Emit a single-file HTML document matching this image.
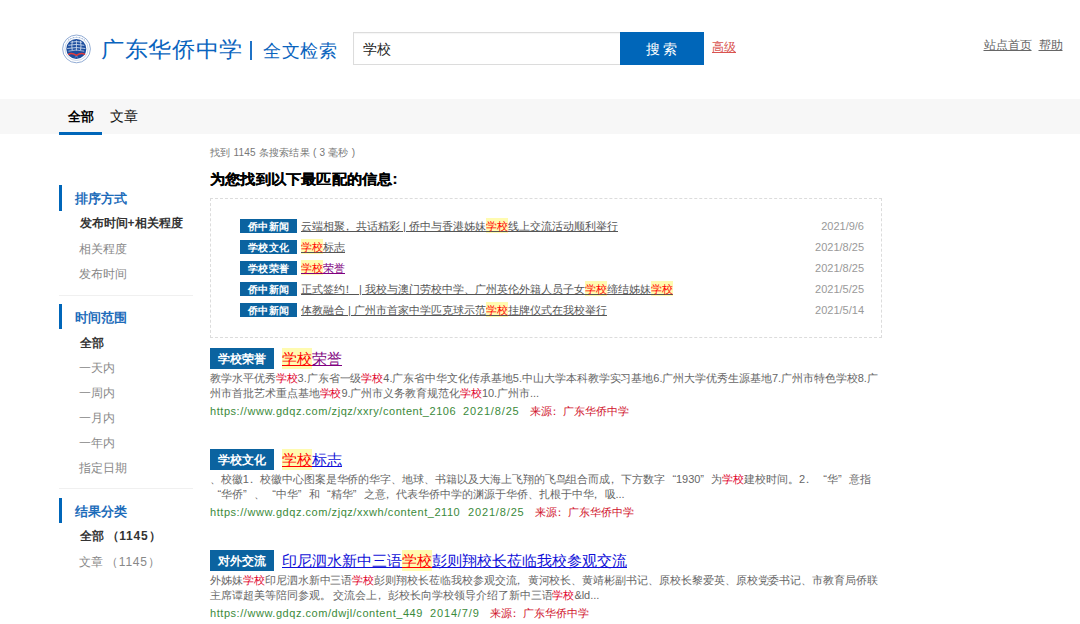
<!DOCTYPE html>
<html><head><meta charset="utf-8">
<style>
*{margin:0;padding:0;box-sizing:border-box}
html,body{width:1080px;height:624px;overflow:hidden;background:#fff}
body{font-family:"Liberation Sans",sans-serif;position:relative;color:#333}
.a{position:absolute;white-space:nowrap;line-height:1}
.u{text-decoration:underline}
.hl{background:#fffbb0;color:#f00}
.rd{color:#e0002a}

.row{position:absolute;left:240px;height:14px;white-space:nowrap;font-size:11px;line-height:14px}
.tag{display:inline-block;width:57px;height:14px;background:#0b63a0;color:#fff;font-weight:bold;text-align:center;font-size:10px;letter-spacing:0.5px;line-height:15px;vertical-align:top}
.t .hl{padding:2px 0 1px}
.t{display:inline-block;margin-left:4px;color:#555;vertical-align:top}
.date{position:absolute;right:216px;font-size:11px;line-height:12px;color:#999;white-space:nowrap}
.res{position:absolute;left:210px;width:672px;height:80px}
.rtag{position:absolute;left:0;top:0;width:64px;height:21px;background:#0b63a0;color:#fff;font-weight:bold;text-align:center;font-size:12px;line-height:23px}
.rt{position:absolute;left:72px;top:0;font-size:15px;line-height:21px;white-space:nowrap}
.rt .hl{padding:2px 0 2px;text-decoration:underline}
.dl{position:absolute;left:0;font-size:11px;line-height:11px;color:#666;white-space:nowrap;letter-spacing:-0.05px}
.url{position:absolute;left:0;font-size:11px;line-height:11px;color:#3b8a3b;white-space:nowrap;letter-spacing:0.55px}
.dt{letter-spacing:0.85px}
.src{color:#d0102a;letter-spacing:0}
.q1{display:inline-block;width:11px;text-align:right}
.q2{display:inline-block;width:11px;text-align:left}
.p{display:inline-block;transform:translateX(-0.3em)}
</style></head><body>
<!-- header -->
<svg class="a" style="left:60px;top:33px" width="34" height="32" viewBox="60 33 34 32">
  <circle cx="76.5" cy="48.9" r="13.9" fill="#fff" stroke="#86a3cf" stroke-width="0.9"/>
  <circle cx="76.5" cy="48.9" r="11.6" fill="none" stroke="#b4c7e3" stroke-width="0.7"/>
  <g fill="#5f82bd"><circle cx="70.8" cy="38.3" r="0.45"/><circle cx="73.6" cy="37.4" r="0.45"/><circle cx="76.5" cy="37.1" r="0.45"/><circle cx="79.4" cy="37.4" r="0.45"/><circle cx="82.2" cy="38.3" r="0.45"/><circle cx="68.3" cy="39.8" r="0.45"/><circle cx="84.7" cy="39.8" r="0.45"/></g>
  <circle cx="76.3" cy="48.9" r="10" fill="#1c4d9e"/>
  <g stroke="#d5e0f0" fill="none" stroke-width="0.85">
   <path d="M70.5 42.3 Q76.3 40.8 82.1 42.3 M68.3 45.3 Q76.3 43.6 84.3 45.3 M67.2 48.5 Q76.3 46.6 85.4 48.5"/>
   <path d="M68.4 51.2 Q76.3 48.8 84.2 51.2" stroke-width="0.7"/>
   <path d="M76.4 40.4 V50.6 M72.4 40.8 Q71.3 45.5 72.2 50.2 M80.4 40.8 Q81.5 45.5 80.6 50.2"/>
  </g>
  <path d="M68.2 54.6 Q71.5 52.2 76.4 55.4 Q81.3 52.2 85.1 54.6" stroke="#e33b3b" stroke-width="1.4" fill="none"/>
  <path d="M74.8 57.2 Q76.4 56 78 57.2" stroke="#8fb0e0" stroke-width="0.6" fill="none"/>
</svg>
<div class="a" style="left:101px;top:38.7px;font-size:23px;letter-spacing:0.7px;color:#0a64be;transform:scaleY(0.95);transform-origin:0 0">广东华侨中学</div>
<div class="a" style="left:250px;top:41px;width:2px;height:19px;background:#1f72c6"></div>
<div class="a" style="left:263px;top:42px;font-size:18px;letter-spacing:0.6px;color:#0a64be">全文检索</div>
<div class="a" style="left:353px;top:32px;width:268px;height:33px;border:1px solid #dcdcdc;border-right:none;box-shadow:inset 0 1px 1px rgba(0,0,0,0.04)"></div>
<div class="a" style="left:362.5px;top:42px;font-size:14px;color:#222">学校</div>
<div class="a" style="left:620px;top:32px;width:84px;height:33px;background:#0066b9"></div>
<div class="a" style="left:645.5px;top:42px;font-size:14px;color:#fff">搜 索</div>
<div class="a u" style="left:712px;top:40.5px;font-size:12px;color:#d9534f">高级</div>
<div class="a u" style="left:983.5px;top:39px;font-size:12px;color:#666">站点首页</div>
<div class="a u" style="left:1038.5px;top:39px;font-size:12px;color:#666">帮助</div>

<!-- nav -->
<div class="a" style="left:0;top:99px;width:1080px;height:35px;background:#f7f7f7"></div>
<div class="a" style="left:67.5px;top:109.5px;font-size:13px;font-weight:bold;color:#000">全部</div>
<div class="a" style="left:110px;top:108.5px;font-size:14px;color:#111">文章</div>
<div class="a" style="left:59px;top:132px;width:43px;height:3px;background:#0066b9"></div>

<!-- sidebar -->
<div class="a" style="left:59px;top:185px;width:3px;height:26px;background:#0066b9"></div>
<div class="a" style="left:75px;top:192px;font-size:13px;font-weight:bold;color:#1d6cba">排序方式</div>
<div class="a" style="left:79.5px;top:217px;font-size:12px;font-weight:bold;color:#333">发布时间+相关程度</div>
<div class="a" style="left:79px;top:243px;font-size:12px;color:#888">相关程度</div>
<div class="a" style="left:79px;top:268px;font-size:12px;color:#888">发布时间</div>
<div class="a" style="left:59px;top:295px;width:134px;height:1px;background:#f0f0f0"></div>

<div class="a" style="left:59px;top:304px;width:3px;height:25px;background:#0066b9"></div>
<div class="a" style="left:75px;top:311px;font-size:13px;font-weight:bold;color:#1d6cba">时间范围</div>
<div class="a" style="left:79.5px;top:336.5px;font-size:12px;font-weight:bold;color:#333">全部</div>
<div class="a" style="left:79px;top:362px;font-size:12px;color:#888">一天内</div>
<div class="a" style="left:79px;top:387px;font-size:12px;color:#888">一周内</div>
<div class="a" style="left:79px;top:412px;font-size:12px;color:#888">一月内</div>
<div class="a" style="left:79px;top:437px;font-size:12px;color:#888">一年内</div>
<div class="a" style="left:79px;top:462px;font-size:12px;color:#888">指定日期</div>
<div class="a" style="left:59px;top:488px;width:134px;height:1px;background:#f0f0f0"></div>

<div class="a" style="left:59px;top:498px;width:3px;height:25px;background:#0066b9"></div>
<div class="a" style="left:75px;top:505px;font-size:13px;font-weight:bold;color:#1d6cba">结果分类</div>
<div class="a" style="left:79.5px;top:530px;font-size:12px;font-weight:bold;color:#333">全部<span style="margin-left:3px;letter-spacing:0.8px">（1145）</span></div>
<div class="a" style="left:79px;top:556px;font-size:12px;color:#888">文章<span style="margin-left:3px;letter-spacing:0.8px">（1145）</span></div>

<!-- main -->
<div class="a" style="left:210px;top:147.5px;font-size:10px;letter-spacing:0.22px;color:#777">找到 1145 条搜索结果 ( 3 毫秒 )</div>
<div class="a" style="left:210px;top:171.5px;font-size:15px;font-weight:bold;color:#000;letter-spacing:0.2px;-webkit-text-stroke:0.2px #000;transform:scaleY(0.92);transform-origin:0 0">为您找到以下最匹配的信息:</div>

<div class="a" style="left:210px;top:198px;width:672px;height:140px;border:1px dashed #dcdcdc"></div>
<div class="row" style="top:219px"><span class="tag">侨中新闻</span><span class="t u">云端相<span style="letter-spacing:-3px">聚</span><span style="letter-spacing:3px">，</span>共话精彩 | 侨中与香港姊妹<span class="hl">学校</span>线上交流活动顺利举行</span></div>
<div class="row" style="top:240px"><span class="tag">学校文化</span><span class="t u"><span class="hl">学校</span>标志</span></div>
<div class="row" style="top:261px"><span class="tag">学校荣誉</span><span class="t u" style="color:#800080"><span class="hl">学校</span>荣誉</span></div>
<div class="row" style="top:282px"><span class="tag">侨中新闻</span><span class="t u">正式签<span style="letter-spacing:-3px">约</span><span style="letter-spacing:3px">！</span> | 我校与澳门劳校中学、广州英伦外籍人员子女<span class="hl">学校</span>缔结姊妹<span class="hl">学校</span></span></div>
<div class="row" style="top:303px"><span class="tag">侨中新闻</span><span class="t u">体教融合 | 广州市首家中学匹克球示范<span class="hl">学校</span>挂牌仪式在我校举行</span></div>
<div class="date" style="top:220px">2021/9/6</div>
<div class="date" style="top:241px">2021/8/25</div>
<div class="date" style="top:262px">2021/8/25</div>
<div class="date" style="top:283px">2021/5/25</div>
<div class="date" style="top:304px">2021/5/14</div>

<div class="res" style="top:348px">
 <span class="rtag">学校荣誉</span><span class="rt u" style="color:#800080"><span class="hl">学校</span>荣誉</span>
 <div class="dl" style="top:24.5px">教学水平优秀<span class="rd">学校</span>3.广东省一级<span class="rd">学校</span>4.广东省中华文化传承基地5.中山大学本科教学实习基地6.广州大学优秀生源基地7.广州市特色学校8.广</div>
 <div class="dl" style="top:39.5px">州市首批艺术重点基地<span class="rd">学校</span>9.广州市义务教育规范化<span class="rd">学校</span>10.广州市...</div>
 <div class="url" style="top:58px">https://www.gdqz.com/zjqz/xxry/content_2106</div>
 <div class="url dt" style="top:58px;left:253px">2021/8/25</div>
 <div class="url src" style="top:58px;left:320px">来源<span class="p">：</span>广东华侨中学</div>
</div>
<div class="res" style="top:449px">
 <span class="rtag">学校文化</span><span class="rt u" style="color:#1010d8"><span class="hl">学校</span>标志</span>
 <div class="dl" style="top:24.5px">、校徽1<span class="p">．</span>校徽中心图案是华侨的华字、地球、书籍以及大海上飞翔的飞鸟组合而成<span class="p">，</span>下方数字<span class="q1">“</span>1930<span class="q2">”</span>为<span class="rd">学校</span>建校时间。2<span class="p">．</span><span class="q1">“</span>华<span class="q2">”</span>意指</div>
 <div class="dl" style="top:39.5px"><span class="q1">“</span>华侨<span class="q2">”</span>、<span class="q1">“</span>中华<span class="q2">”</span>和<span class="q1">“</span>精华<span class="q2">”</span>之意<span class="p">，</span>代表华侨中学的渊源于华侨、扎根于中华<span class="p">，</span>吸...</div>
 <div class="url" style="top:58px">https://www.gdqz.com/zjqz/xxwh/content_2110</div>
 <div class="url dt" style="top:58px;left:258px">2021/8/25</div>
 <div class="url src" style="top:58px;left:325px">来源<span class="p">：</span>广东华侨中学</div>
</div>
<div class="res" style="top:550px">
 <span class="rtag">对外交流</span><span class="rt u" style="color:#1010d8">印尼泗水新中三语<span class="hl">学校</span>彭则翔校长莅临我校参观交流</span>
 <div class="dl" style="top:24.5px">外姊妹<span class="rd">学校</span>印尼泗水新中三语<span class="rd">学校</span>彭则翔校长莅临我校参观交流<span class="p">，</span>黄河校长、黄靖彬副书记、原校长黎爱英、原校党委书记、市教育局侨联</div>
 <div class="dl" style="top:39.5px">主席谭超美等陪同参观。 交流会上<span class="p">，</span>彭校长向学校领导介绍了新中三语<span class="rd">学校</span>&amp;ld...</div>
 <div class="url" style="top:58px">https://www.gdqz.com/dwjl/content_449</div>
 <div class="url dt" style="top:58px;left:220px">2014/7/9</div>
 <div class="url src" style="top:58px;left:280px">来源<span class="p">：</span>广东华侨中学</div>
</div>
</body></html>
